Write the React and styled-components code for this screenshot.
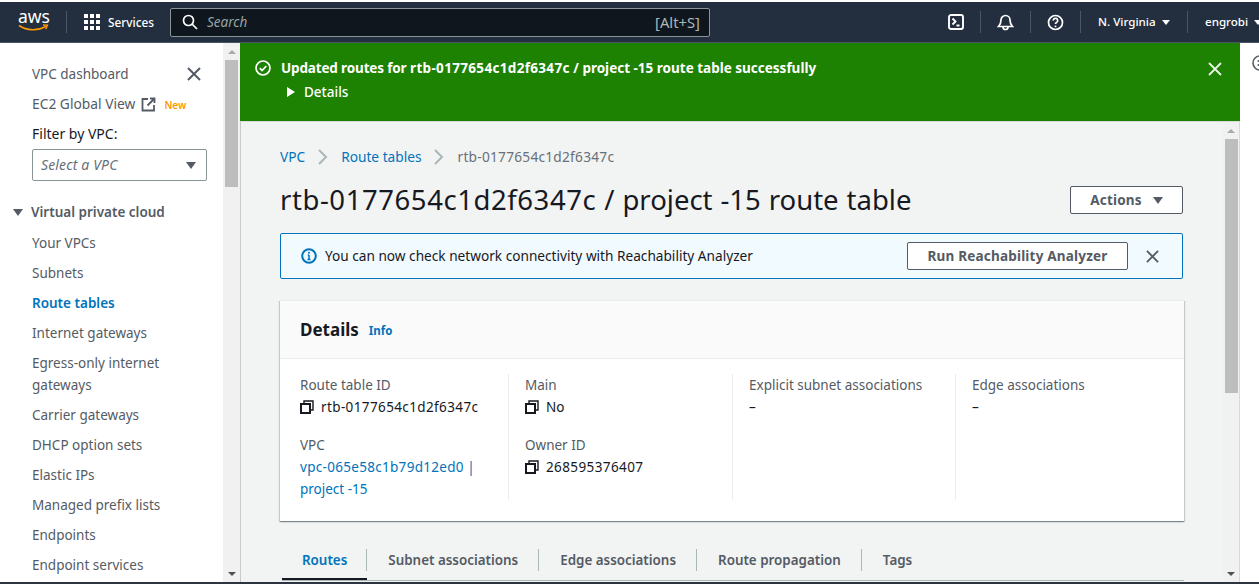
import React from 'react';
import styled, { createGlobalStyle } from 'styled-components';

const Global = createGlobalStyle`
  html, body { margin: 0; padding: 0; height: 100%; overflow: hidden; background: #fff; }
  body { font-family: "Noto Sans", "Open Sans", Arial, sans-serif; font-size: 14px; line-height: 22px; color: #16191f; }
  * { box-sizing: border-box; }
`;

const Page = styled.div`
  height: 584px; width: 1259px; display: flex; flex-direction: column; overflow: hidden;
  background: #fff; border-top: 2px solid #fff; border-bottom: 2px solid #2b3440;
`;
const Header = styled.header`
  height: 41px; flex: none; background: #232f3e; display: flex; align-items: center; color: #fff;
  border-bottom: 1px solid #4a5461;
`;
const Logo = styled.div`
  width: 66px; padding-left: 18px; flex: none; display: flex;
`;
const Divider = styled.span`
  width: 1px; height: 22px; background: #4b5766; flex: none;
`;
const ServicesBtn = styled.div`
  display: flex; align-items: center; gap: 8px; padding-left: 17px; width: 103px; flex: none;
  font-size: 11.8px; font-weight: 500;
`;
const SearchBox = styled.div`
  width: 540px; height: 29px; flex: none; background: #10161e; border: 1px solid #879596; border-radius: 2px;
  display: flex; align-items: center; padding: 0 9px 0 11px; gap: 9px;
  font-size: 13.5px; color: #95a5a6;
`;
const SearchText = styled.span`
  font-style: italic; flex: 1;
`;
const Hint = styled.span`
  font-size: 14.8px; color: #aab7b8;
`;
const HeaderRight = styled.div`
  margin-left: auto; display: flex; align-items: center;
`;
const IconSlot = styled.div`
  width: 49px; height: 22px; display: flex; align-items: center; justify-content: center; flex: none;
`;
const HeaderMenu = styled.div`
  display: flex; align-items: center; gap: 6px; font-size: 11.6px; font-weight: 500; flex: none;
  width: ${p => p.$w}px; padding-left: ${p => p.$pad}px; white-space: nowrap; overflow: hidden;
`;
const Caret = styled.span`
  width: 0; height: 0; flex: none; display: inline-block;
  border-left: ${p => p.$s}px solid transparent; border-right: ${p => p.$s}px solid transparent;
  border-top: ${p => p.$s * 1.35}px solid ${p => p.$c};
`;
const Body = styled.div`
  flex: 1; min-height: 0; display: flex;
`;
const Sidebar = styled.nav`
  width: 223px; flex: none; padding: 20px 0 0 32px; overflow: hidden; color: #545b64; position: relative;
  font-size: 13.5px;
`;
const CloseSide = styled.div`
  position: absolute; top: 24px; left: 187px; display: flex;
`;
const NavItem = styled.div`
  margin-bottom: 8px; color: ${p => p.$active ? '#0073bb' : '#545b64'};
  font-weight: ${p => p.$active ? 600 : 400}; width: 150px;
`;
const GlobalRow = styled.div`
  display: flex; align-items: center; margin-bottom: 8px; white-space: nowrap; font-size: 13.8px; height: 22px;
`;
const NewTag = styled.span`
  font-size: 10px; line-height: 14px; font-weight: 600; color: #ff9900; margin-left: 8px; margin-top: 2px;
`;
const FilterLabel = styled.div`
  color: #16191f; font-size: 14px; line-height: 22px; margin-bottom: 4px;
`;
const Select = styled.div`
  width: 175px; height: 32px; border: 1px solid #879596; border-radius: 2px; display: flex;
  align-items: center; justify-content: space-between; padding: 0 10px 0 8px; font-style: italic; color: #687078;
  font-size: 14px; letter-spacing: .15px; margin-bottom: 20px;
`;
const SectionHead = styled.div`
  font-weight: 600; margin: 0 0 9px -19px; display: flex; align-items: center; gap: 8px; color: #545b64;
`;
const Track = styled.div`
  width: 17px; flex: none; background: #f1f1f1; display: flex; flex-direction: column; align-items: center;
  padding: 7px 0 6px; border-right: ${p => p.$edge ? '1px solid #d5dbdb' : 'none'};
`;
const Thumb = styled.div`
  width: 13px; height: ${p => p.$h}px; background: #bdbdbd; margin-top: 6px;
`;
const ArrowUp = styled.span`
  width: 0; height: 0; border-left: 4px solid transparent; border-right: 4px solid transparent; border-bottom: 4px solid #a9a9a9;
`;
const ArrowDown = styled.span`
  width: 0; height: 0; margin-top: auto; border-left: 4px solid transparent; border-right: 4px solid transparent; border-top: 4px solid #505050;
`;
const Main = styled.div`
  width: 1000px; flex: none; display: flex; flex-direction: column; min-height: 0;
`;
const Flash = styled.div`
  height: 79px; flex: none; background: #1d8102; color: #fff; display: flex; padding: 14px 18px 0 15px;
  border-bottom: 1px solid #d5dbdb;
`;
const FlashIcon = styled.div`
  width: 26px; flex: none; padding-top: 3px; display: flex; align-items: flex-start;
`;
const FlashBody = styled.div`
  flex: 1;
`;
const FlashTitle = styled.div`
  font-weight: 700; font-size: 13.5px; line-height: 22px;
`;
const FlashDetails = styled.div`
  display: flex; align-items: center; gap: 9px; margin: 2px 0 0 6px; font-weight: 500; font-size: 13.5px; line-height: 22px;
`;
const DetailCaret = styled.span`
  width: 0; height: 0; border-top: 5px solid transparent; border-bottom: 5px solid transparent; border-left: 8px solid #fff;
`;
const Ident = styled.span`
  letter-spacing: ${p => p.$ls}px;
`;
const ContentRow = styled.div`
  flex: 1; min-height: 0; display: flex; border-left: 1px solid #c4cccc;
`;
const Content = styled.main`
  flex: 1; min-width: 0; background: #f2f3f3; padding: 24px 40px 0 39px; overflow: hidden;
`;
const Crumbs = styled.div`
  display: flex; align-items: center; height: 22px; font-size: 13.7px;
`;
const Crumb = styled.span`
  color: ${p => p.$link ? '#0073bb' : '#687078'};
`;
const Sep = styled.span`
  display: flex; margin: 0 13px;
`;
const TitleRow = styled.div`
  display: flex; align-items: center; justify-content: space-between; margin-top: 13px; height: 38px;
`;
const Title = styled.h1`
  margin: 0; font-size: 27.5px; line-height: 36px; font-weight: 400; color: #16191f; white-space: nowrap;
  word-spacing: .8px;
`;
const Button = styled.div`
  height: 28px; width: ${p => p.$w}px; flex: none; background: #fff; border: 1px solid #545b64; border-radius: 2px;
  display: flex; align-items: center; justify-content: center; gap: 11px; color: #545b64; font-weight: 700; font-size: 13.5px;
  letter-spacing: .2px;
`;
const Alert = styled.div`
  height: 46px; margin-top: 14px; border: 1px solid #0073bb; border-radius: 2px; background: #f1faff;
  display: flex; align-items: center; padding: 0 23px 0 20px;
`;
const AlertText = styled.span`
  margin-left: 8px; flex: 1; font-size: 13.65px; color: #16191f;
`;
const AlertClose = styled.div`
  display: flex; margin-left: 18px;
`;
const Card = styled.section`
  margin-top: 21px; background: #fff; width: 904px; height: 221px; border-top: 1px solid #eaeded;
  box-shadow: 0 1px 1px 0 rgba(0,28,36,.3), 1px 1px 1px 0 rgba(0,28,36,.15), -1px 1px 1px 0 rgba(0,28,36,.15);
`;
const CardHead = styled.div`
  height: 58px; background: #fafafa; border-bottom: 1px solid #eaeded; display: flex; align-items: center; padding: 0 20px;
  gap: 10px;
`;
const CardTitle = styled.h2`
  margin: 0; font-size: 17px; font-weight: 700; line-height: 22px; color: #16191f;
`;
const InfoLink = styled.span`
  font-size: 11.5px; font-weight: 700; color: #0073bb; margin-top: 3px;
`;
const Grid = styled.div`
  display: grid; grid-template-columns: 209px 224px 223px 1fr; padding: 15px 0 0 20px;
`;
const Col = styled.div`
  height: 126px; padding-left: ${p => p.$first ? 0 : 16}px; border-left: ${p => p.$first ? 'none' : '1px solid #eaeded'};
  display: flex; flex-direction: column; gap: 16px;
  margin-left: ${p => p.$first ? 0 : -1}px;
`;
const Field = styled.div`
  display: flex; flex-direction: column;
`;
const Label = styled.div`
  color: #545b64; font-size: 13.5px;
`;
const Value = styled.div`
  display: flex; align-items: center; gap: 7px; font-size: 13.5px; color: #16191f;
`;
const VpcLink = styled.div`
  color: #0073bb; font-size: 13.5px; width: 190px;
`;
const Tabs = styled.div`
  margin-top: 27px; margin-left: 2px; display: flex; align-items: flex-start; height: 33px; width: 902px;
  border-bottom: 1px solid #aab7b8;
`;
const Tab = styled.div`
  height: 32px; padding: 0 21px 6px; display: flex; align-items: center; white-space: nowrap; position: relative;
  font-weight: 600; font-size: 13.4px; color: ${p => p.$active ? '#0073bb' : '#545b64'};
  border-bottom: ${p => p.$active ? '2px solid #16191f' : '2px solid transparent'};
  &:first-child { padding-left: 20px; padding-right: 20px; }
  &:not(:last-child)::after {
    content: ''; position: absolute; right: 0; top: 1px; height: 22px; width: 1px; background: #aab7b8;
  }
`;
const RightRail = styled.aside`
  flex: 1; min-width: 0; overflow: hidden; padding: 12px 0 0 12px; background: #fff;
`;
const RailIcon = styled.svg`
  display: block; flex: none;
`;

const CopyIcon = () => (
  <svg width="14" height="14" viewBox="0 0 14 14" fill="none" stroke="#16191f" strokeWidth="2">
    <rect x="1" y="4" width="9" height="9" />
    <path d="M4 3V1h9v9h-2" strokeWidth="1.4" />
  </svg>
);
const XIcon = ({ size = 14, color = '#545b64', w = 2 }) => (
  <svg width={size} height={size} viewBox="0 0 14 14" stroke={color} strokeWidth={w} fill="none">
    <path d="M1 1l12 12M13 1L1 13" />
  </svg>
);
const Chevron = () => (
  <svg width="10" height="16" viewBox="0 0 10 16" fill="none" stroke="#aab7b8" strokeWidth="2">
    <path d="M1 1l7 7-7 7" />
  </svg>
);

const items = ['Your VPCs', 'Subnets', 'Route tables', 'Internet gateways', 'Egress-only internet gateways', 'Carrier gateways', 'DHCP option sets', 'Elastic IPs', 'Managed prefix lists', 'Endpoints', 'Endpoint services'];
const tabs = ['Routes', 'Subnet associations', 'Edge associations', 'Route propagation', 'Tags'];

export default function App() {
  return (
    <Page>
      <Global />
      <Header>
        <Logo>
          <svg width="32" height="24" viewBox="0 0 32 24" style={{ overflow: 'visible' }}>
            <text x="0" y="13" fontFamily="Noto Sans, sans-serif" fontSize="17.5" fill="#fff">aws</text>
            <path d="M1 15.5c8 5.5 19 5.5 27 .8" fill="none" stroke="#ff9900" strokeWidth="1.6" />
            <path d="M25 15l4.5 .2-1.7 4" fill="none" stroke="#ff9900" strokeWidth="1.3" />
          </svg>
        </Logo>
        <Divider />
        <ServicesBtn>
          <svg width="16" height="16" viewBox="0 0 16 16" fill="#fff">
            {[0, 6, 12].flatMap(y => [0, 6, 12].map(x => <rect key={x + '-' + y} x={x} y={y} width="4" height="4" />))}
          </svg>
          Services
        </ServicesBtn>
        <SearchBox>
          <svg width="16" height="16" viewBox="0 0 16 16" fill="none" stroke="#fff" strokeWidth="1.7">
            <circle cx="6.5" cy="6.5" r="5" /><path d="M10 10l5 5" />
          </svg>
          <SearchText>Search</SearchText>
          <Hint>[Alt+S]</Hint>
        </SearchBox>
        <HeaderRight>
          <IconSlot>
            <svg width="16" height="16" viewBox="0 0 16 16" fill="none" stroke="#fff" strokeWidth="1.9">
              <rect x="1" y="1" width="14" height="14" rx="2" /><path d="M4.5 4.5L7.5 7.5 4.5 10.5M8.5 11.5h3" />
            </svg>
          </IconSlot>
          <Divider />
          <IconSlot>
            <svg width="17" height="18" viewBox="0 0 17 18" fill="none" stroke="#fff" strokeWidth="1.7">
              <path d="M1.5 13.500c2-2 2.500-3.500 2.500-6.500a4.500 4.500 0 019 0c0 3 .5 4.500 2.500 6.500z" /><path d="M6 14a2.500 2.500 0 005 0" />
            </svg>
          </IconSlot>
          <Divider />
          <IconSlot>
            <svg width="17" height="17" viewBox="0 0 17 17" fill="none" stroke="#fff" strokeWidth="1.7">
              <circle cx="8.5" cy="8.5" r="7" /><path d="M6.3 6.6a2.2 2.2 0 114 1.1c-.7.8-1.8 1-1.8 2.3" /><path d="M8.5 11.6v1.6" />
            </svg>
          </IconSlot>
          <Divider />
          <HeaderMenu $w={106} $pad={17}>N. Virginia <Caret $s={4} $c="#fff" /></HeaderMenu>
          <Divider />
          <HeaderMenu $w={71} $pad={17}>engrobi <Caret $s={4} $c="#fff" /></HeaderMenu>
        </HeaderRight>
      </Header>
      <Body>
        <Sidebar>
          <CloseSide><XIcon size={14} /></CloseSide>
          <NavItem>VPC dashboard</NavItem>
          <GlobalRow>
            EC2 Global View
            <svg style={{ marginLeft: 6 }} width="15" height="15" viewBox="0 0 15 15" fill="none" stroke="#545b64" strokeWidth="1.8">
              <path d="M7 2H1.5v11.5H13V8M9 1.5h4.5V6M13.5 1.5L6.5 8.500" />
            </svg>
            <NewTag>New</NewTag>
          </GlobalRow>
          <FilterLabel>Filter by VPC:</FilterLabel>
          <Select>Select a VPC <Caret $s={5.5} $c="#545b64" /></Select>
          <SectionHead><Caret $s={5.5} $c="#545b64" />Virtual private cloud</SectionHead>
          {items.map(i => <NavItem key={i} $active={i === 'Route tables'}>{i}</NavItem>)}
        </Sidebar>
        <Track>
          <ArrowUp />
          <Thumb $h={127} />
          <ArrowDown />
        </Track>
        <Main>
          <Flash>
            <FlashIcon>
              <svg width="16" height="16" viewBox="0 0 16 16" fill="none" stroke="#fff" strokeWidth="1.7">
                <circle cx="8" cy="8" r="7" /><path d="M4.8 8.2l2.3 2.3 4.2-4.5" />
              </svg>
            </FlashIcon>
            <FlashBody>
              <FlashTitle>
                <Ident $ls={-0.15}>Updated routes for</Ident> <Ident $ls={0.33}>rtb-0177654c1d2f6347c</Ident> / project -15 route table successfully
              </FlashTitle>
              <FlashDetails><DetailCaret />Details</FlashDetails>
            </FlashBody>
            <svg style={{ marginTop: 5 }} width="14" height="14" viewBox="0 0 14 14" stroke="#eaf3e6" strokeWidth="1.8" fill="none">
              <path d="M1 1l12 12M13 1L1 13" />
            </svg>
          </Flash>
          <ContentRow>
            <Content>
              <Crumbs>
                <Crumb $link>VPC</Crumb><Sep><Chevron /></Sep>
                <Crumb $link>Route tables</Crumb><Sep><Chevron /></Sep>
                <Crumb><Ident $ls={0.25}>rtb-0177654c1d2f6347c</Ident></Crumb>
              </Crumbs>
              <TitleRow>
                <Title><Ident $ls={0.57}>rtb-0177654c1d2f6347c</Ident> / project -15 route table</Title>
                <Button $w={113}>Actions <Caret $s={5.5} $c="#545b64" /></Button>
              </TitleRow>
              <Alert>
                <svg width="16" height="16" viewBox="0 0 16 16" fill="none">
                  <circle cx="8" cy="8" r="6.8" stroke="#0073bb" strokeWidth="2" />
                  <path d="M8 7v4.5M6.5 11.5h3M6.8 7H8" stroke="#0073bb" strokeWidth="1.5" />
                  <circle cx="8" cy="4.7" r="1" fill="#0073bb" />
                </svg>
                <AlertText>You can now check network connectivity with Reachability Analyzer</AlertText>
                <Button $w={221}>Run Reachability Analyzer</Button>
                <AlertClose><XIcon size={13} /></AlertClose>
              </Alert>
              <Card>
                <CardHead><CardTitle>Details</CardTitle><InfoLink>Info</InfoLink></CardHead>
                <Grid>
                  <Col $first>
                    <Field><Label>Route table ID</Label><Value><CopyIcon /><Ident $ls={0.38}>rtb-0177654c1d2f6347c</Ident></Value></Field>
                    <Field><Label>VPC</Label><VpcLink><Ident $ls={0.3}>vpc-065e58c1b79d12ed0</Ident> | project -15</VpcLink></Field>
                  </Col>
                  <Col>
                    <Field><Label>Main</Label><Value><CopyIcon />No</Value></Field>
                    <Field><Label>Owner ID</Label><Value><CopyIcon /><Ident $ls={0.4}>268595376407</Ident></Value></Field>
                  </Col>
                  <Col>
                    <Field><Label>Explicit subnet associations</Label><Value>–</Value></Field>
                  </Col>
                  <Col>
                    <Field><Label>Edge associations</Label><Value>–</Value></Field>
                  </Col>
                </Grid>
              </Card>
              <Tabs>
                {tabs.map((t, i) => <Tab key={t} $active={i === 0}>{t}</Tab>)}
              </Tabs>
            </Content>
            <Track $edge>
              <ArrowUp />
              <Thumb $h={254} />
              <ArrowDown />
            </Track>
          </ContentRow>
        </Main>
        <RightRail>
          <RailIcon width="16" height="16" viewBox="0 0 16 16" fill="none">
            <circle cx="8" cy="8" r="7" stroke="#545b64" strokeWidth="1.6" />
            <circle cx="6.5" cy="6" r="1" fill="#545b64" />
            <circle cx="6.5" cy="10" r="1" fill="#545b64" />
          </RailIcon>
        </RightRail>
      </Body>
    </Page>
  );
}
